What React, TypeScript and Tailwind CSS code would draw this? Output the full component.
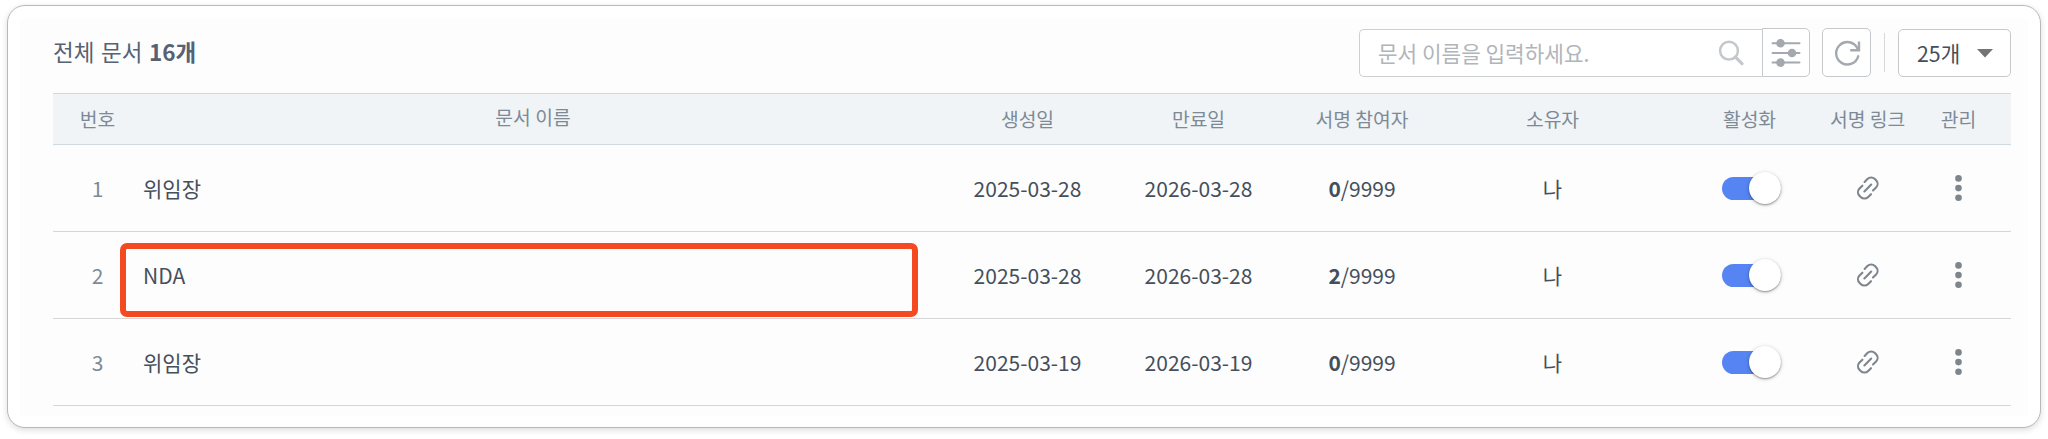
type Doc = {
  no: number;
  name: string;
  created: string;
  expires: string;
  signed: number;
  highlighted?: boolean;
};

const docs: Doc[] = [
  { no: 1, name: "위임장", created: "2025-03-28", expires: "2026-03-28", signed: 0 },
  { no: 2, name: "NDA", created: "2025-03-28", expires: "2026-03-28", signed: 2, highlighted: true },
  { no: 3, name: "위임장", created: "2025-03-19", expires: "2026-03-19", signed: 0 },
];

const columns =
  "grid grid-cols-[47px_826px_163px_179px_148px_233px_161px_75px_107px] items-center pl-5 text-center whitespace-nowrap";

function SearchIcon() {
  return (
    <svg className="h-7 w-7" viewBox="0 0 28 28" fill="none" stroke="#c3c8cc">
      <circle cx="12" cy="11.7" r="8.9" strokeWidth="2.5" />
      <path d="M18.4 18.2 25 24.6" strokeWidth="3.2" strokeLinecap="round" />
    </svg>
  );
}

function FilterIcon() {
  return (
    <svg className="h-7 w-[30px]" viewBox="0 0 30 28" stroke="#a3a9af" fill="#a3a9af" strokeWidth="2" strokeLinecap="round">
      <path d="M1.5 4.2h27M1.5 14h27M1.5 23.6h27" />
      <circle cx="9.5" cy="4.2" r="3.3" />
      <circle cx="21" cy="14" r="3.3" />
      <circle cx="9.5" cy="23.6" r="3.3" />
    </svg>
  );
}

function RefreshIcon() {
  return (
    <svg className="h-7 w-7" viewBox="0 0 28 28" fill="none" stroke="#a3a9af" strokeWidth="2.4">
      <path d="M25.2 17.2A11.2 11.2 0 1 1 24.4 9.3" strokeLinecap="round" />
      <path d="M26 2.4v8.8h-8.8" />
    </svg>
  );
}

function LinkIcon() {
  return (
    <svg className="h-6 w-6" viewBox="0 0 24 24" fill="none" stroke="#7d858d" strokeWidth="2.1" strokeLinecap="round">
      <path d="M9 6.3 11.8 3.4a5.3 5.3 0 0 1 7.5 0l1.2 1.2a5.1 5.1 0 0 1 0 7.2L17.4 14.8" transform="translate(-.4 -.4)" />
      <path d="M6.4 9.3 3.5 12.2a5.1 5.1 0 0 0 0 7.2l1.2 1.2a5.3 5.3 0 0 0 7.5 0L15 17.8" transform="translate(0 .4)" />
      <path d="M8.4 15.4 15.2 8.6" />
    </svg>
  );
}

function MoreIcon() {
  return (
    <svg className="h-[27px] w-[7px]" viewBox="0 0 7 27" fill="#7d858d">
      <circle cx="3.5" cy="3.4" r="3.3" />
      <circle cx="3.5" cy="13.1" r="3.3" />
      <circle cx="3.5" cy="22.8" r="3.3" />
    </svg>
  );
}

function Toggle() {
  return (
    <span className="ml-1 flex h-8 w-[60px] items-center">
      <span className="flex h-[23px] w-[53px] items-center justify-end rounded-full bg-[#5684f3]">
        <span className="-mr-[6px] h-8 w-8 shrink-0 rounded-full bg-white shadow-[0_1px_2px_rgba(0,0,0,0.38),0_1px_5px_rgba(0,0,0,0.14)]" />
      </span>
    </span>
  );
}

export default function App() {
  return (
    <div className="h-[439px] w-[2048px] overflow-hidden bg-white pt-[5px] pl-[7px] font-['Noto_Sans_CJK_KR',sans-serif] text-[#454f5b]">
      <main className="h-[423px] w-[2034px] rounded-[18px] border border-[#b8b8b8] bg-white p-3 shadow-[0_2px_6px_rgba(0,0,0,0.14)]">
        <div className="h-[398px] bg-[#fdfdfd] pl-[33px]">
          <header className="flex h-[75px] w-[1958px] items-start pt-[10px]">
            <h1 className="mt-[9px] text-[22.5px] leading-7 text-[#566172] [word-spacing:1.5px]">
              전체 문서 <b className="font-bold">16개</b>
            </h1>
            <div className="mt-px ml-auto flex h-12 w-[403px] items-center rounded-l-[5px] border border-r-0 border-[#cdcfd1] bg-white pr-[17px] pl-[18px]">
              <span className="flex-1 text-[21.3px] leading-none text-[#b0b5ba]">문서 이름을 입력하세요.</span>
              <SearchIcon />
            </div>
            <button className="flex h-[49px] w-12 items-center justify-center rounded-r-[5px] border border-[#c6c9cc] bg-white">
              <FilterIcon />
            </button>
            <button className="ml-3 flex h-[49px] w-[49px] items-center justify-center rounded-[5px] border border-[#c6c9cc] bg-white">
              <RefreshIcon />
            </button>
            <span className="mt-[5px] ml-[13px] h-[39px] w-px bg-[#d6d8da]" />
            <button className="mt-px ml-[13px] flex h-12 w-[113px] items-center rounded-[5px] border border-[#c6c9cc] bg-white pr-[17px] pl-[18px] text-[21.3px] leading-none">
              25개
              <svg className="ml-auto h-[9px] w-4" viewBox="0 0 16 9" fill="#747474">
                <path d="M0 0h16L8 8.5z" />
              </svg>
            </button>
          </header>

          <div className="w-[1958px]">
            <div className={`${columns} h-[52px] border-y border-[#d0dade] bg-[#f0f4f7] text-[19.3px] leading-7 text-[#7d8a96]`}>
              <span className="pl-0.5">번호</span>
              <span className="-mt-[5px]">문서 이름</span>
              <span>생성일</span>
              <span>만료일</span>
              <span>서명 참여자</span>
              <span>소유자</span>
              <span>활성화</span>
              <span>서명 링크</span>
              <span>관리</span>
            </div>
            {docs.map((doc) => (
              <div key={doc.no} className={`${columns} h-[87px] border-b border-[#d6d6d6] text-[21px] leading-8`}>
                <span className="pl-0.5 text-[#7d8a96]">{doc.no}</span>
                <span className="relative flex h-full items-center pl-[23px]">
                  {doc.name}
                  {doc.highlighted && (
                    <span className="absolute top-[11px] left-0 h-[74px] w-[798px] rounded-[7px] border-[6px] border-[#f44a22]" />
                  )}
                </span>
                <span>{doc.created}</span>
                <span>{doc.expires}</span>
                <span>
                  <b className="font-bold">{doc.signed}</b>/9999
                </span>
                <span>나</span>
                <span className="flex justify-center">
                  <Toggle />
                </span>
                <span className="flex justify-center">
                  <LinkIcon />
                </span>
                <span className="flex justify-center">
                  <MoreIcon />
                </span>
              </div>
            ))}
          </div>
        </div>
      </main>
    </div>
  );
}
